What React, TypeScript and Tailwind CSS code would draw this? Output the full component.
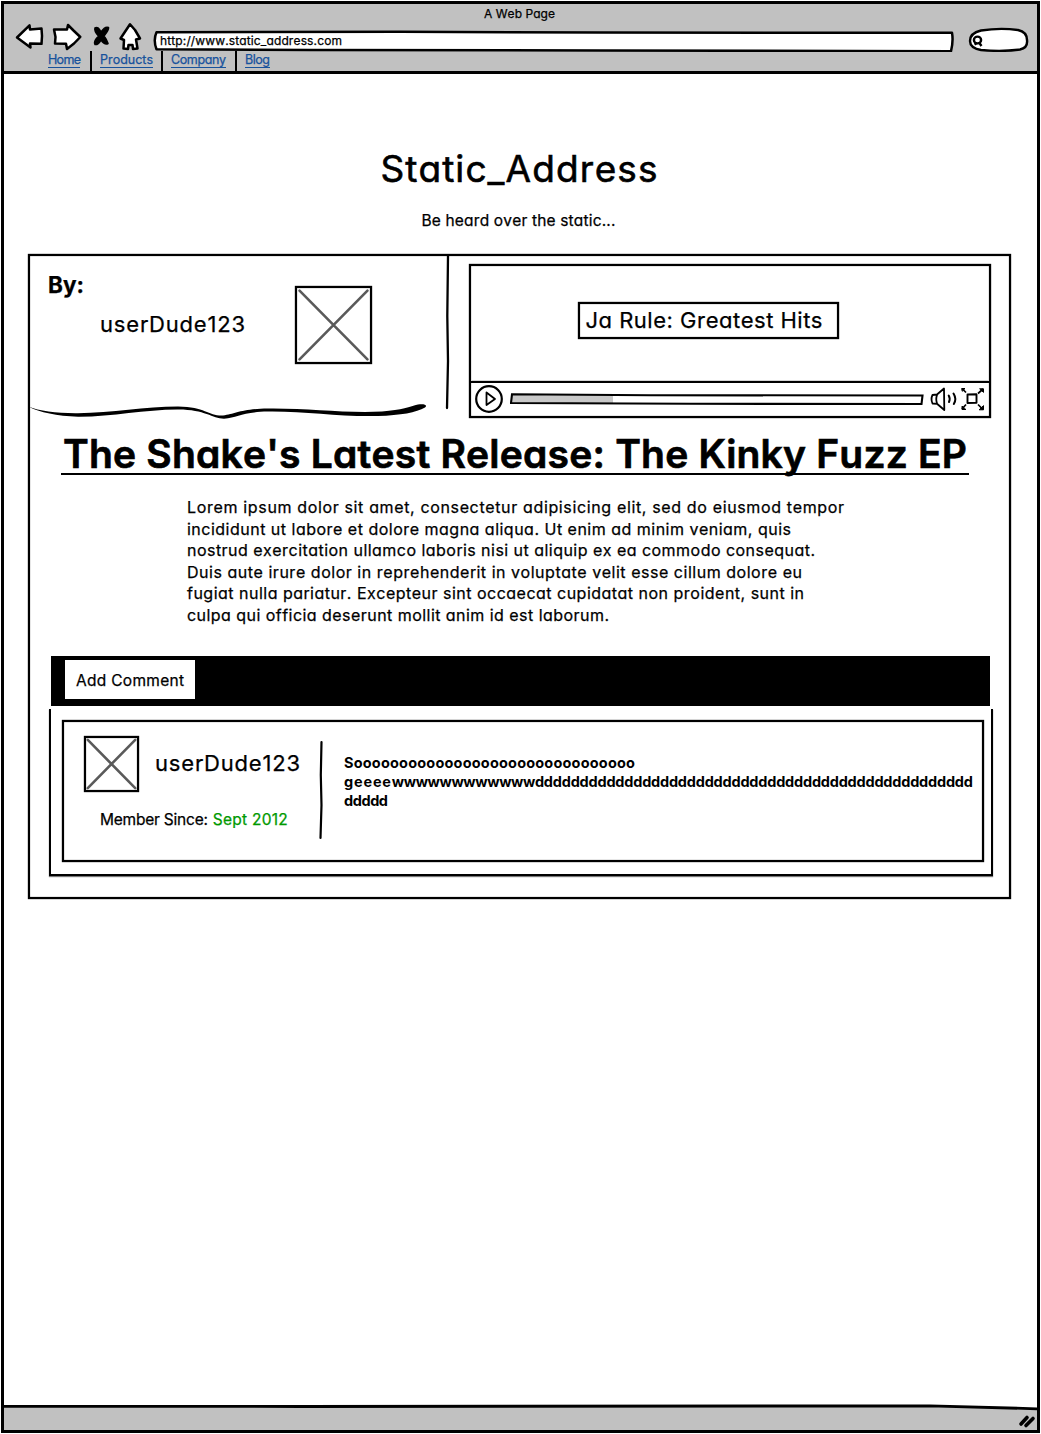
import { useLayoutEffect, useRef, type ReactNode } from "react";

/* One line of text whose letter spacing is adjusted so that it spans `width` pixels. */
function Line({ width, className = "", children }: { width: number; className?: string; children: ReactNode }) {
  const ref = useRef<HTMLSpanElement>(null);
  useLayoutEffect(() => {
    const fit = () => {
      const el = ref.current;
      if (!el) return;
      el.style.letterSpacing = "0px";
      const n = (el.textContent ?? "").length;
      const natural = el.getBoundingClientRect().width;
      el.style.letterSpacing = `${(width - natural) / Math.max(1, n - 1)}px`;
    };
    fit();
    document.fonts?.ready.then(fit);
  }, [width]);
  return (
    <span ref={ref} className={`inline-block whitespace-pre ${className}`}>
      {children}
    </span>
  );
}

function Placeholder({ className }: { className: string }) {
  return (
    <div className={`shrink-0 border-2 border-black shadow-[0_0_1px_#000,inset_0_0_1px_#000] ${className}`}>
      <svg className="block h-full w-full" viewBox="0 0 72 72" preserveAspectRatio="none" fill="none" stroke="#5a5a5a" strokeWidth="2.6" strokeLinecap="round">
        <path vectorEffect="non-scaling-stroke" d="M2.5 2.5 L69.5 69.5 M69.5 2.5 L2.5 69.5" />
      </svg>
    </div>
  );
}

function NavIcons() {
  return (
    <svg className="block h-[30px] w-[130px]" viewBox="14 22 130 30" fill="white" stroke="black" strokeWidth="2.5" strokeLinejoin="round" strokeLinecap="round">
      <path d="M17 37.5 L29.5 25.3 L30 29.5 L41.5 28.5 L42 36 L41.5 43.8 L30 43.5 L30.5 47.5 Z" />
      <path d="M54 29.5 L67 29.5 L68 25 L73.5 30.5 L80.3 37 L74 43.5 L67 49 L66 43.8 L55 43.5 L55.5 37 Z" />
      <path fill="black" strokeWidth="1.6" d="M95 28 Q98 26 101 32 Q105 26 108.5 27.5 Q109 30 104 36 Q107 40 108 43.5 Q105 45.5 101 40 Q98 45 95 44.5 Q93 42 98.5 36 Q94 31 95 28 Z" />
      <path d="M130 24.3 L135 30 L140 38.5 L136 39.5 L137.5 48.5 L133 49 L132.5 45 L128.5 45 L128 49 L123.5 48.5 L124 40 L120.5 38.5 Z" />
    </svg>
  );
}

const links = [
  { label: "Home", width: 33, cell: "w-[51px]" },
  { label: "Products", width: 53, cell: "w-[71px]" },
  { label: "Company", width: 55, cell: "w-[74px]" },
  { label: "Blog", width: 25, cell: "w-[60px]" },
];

function BrowserBar() {
  return (
    <header className="h-[70px] border-b-3 border-black bg-[#c1c1c1]">
      <div className="h-[18px] pr-[2px] pt-[2px] text-center text-[12px] leading-4">
        <Line width={71}>A Web Page</Line>
      </div>
      <div className="flex h-[29px] pl-[10px]">
        <NavIcons />
        <div className="ml-[9px] mt-[6px] grid h-6 w-[801px]">
          <svg className="col-start-1 row-start-1 h-6 w-[801px]" viewBox="153 28 801 24" fill="white" stroke="black" strokeWidth="2.5" strokeLinejoin="round">
            <path d="M156.5 32.2 L400 31.7 L600 32.5 L952 32.8 Q953.5 41 951 51.2 L600 50.5 L310 50 L156.5 49.3 Q153 40 156.5 32.2 Z" />
          </svg>
          <div className="col-start-1 row-start-1 pl-[7px] pt-[5px] text-[12px] leading-4">
            <Line width={182}>http://www.static_address.com</Line>
          </div>
        </div>
        <svg className="ml-[13px] mt-[4px] h-[26px] w-[62px]" viewBox="967 27 62 26" fill="white" stroke="black" strokeWidth="2.4">
          <path d="M981 31.5 Q1000 28.5 1018 31 Q1027 33 1027 41 Q1028 49 1020 50.5 Q1002 53 981 51 Q970 49 970 42 Q970 34 981 31.5 Z" />
          <ellipse cx="977.5" cy="41" rx="3.6" ry="3.4" />
          <path d="M974.5 45.5 L977 44 M979 43.5 L981.5 47" />
        </svg>
      </div>
      <nav className="flex h-[20px] pl-[44px] text-[12.5px] leading-[17px] text-[#17529c]">
        {links.map((l, i) => (
          <div key={l.label} className={`${l.cell} ${i ? "border-l-2 border-black pl-[8px]" : "-mr-[9px]"}`}>
            <a className="inline-block h-[17px] border-b border-[#17529c]">
              <Line width={l.width}>{l.label}</Line>
            </a>
          </div>
        ))}
      </nav>
    </header>
  );
}

function Player() {
  return (
    <section className="mt-[8px] flex h-[154px] w-[522px] flex-col border-2 border-black shadow-[0_0_1px_#000,inset_0_0_1px_#000]">
      <div className="flex h-[115px] items-start justify-center pt-[36px]">
        <div className="-ml-[44px] h-[37px] w-[261px] border-2 border-black pl-[6px] text-[22px] leading-[33px] shadow-[0_0_1px_#000,inset_0_0_1px_#000]">
          <Line width={237}>Ja Rule: Greatest Hits</Line>
        </div>
      </div>
      <div className="flex flex-1 items-center border-t-2 border-black pb-px pl-[4px] shadow-[0_-1px_1px_-1px_#000]">
        <svg className="h-7 w-7" viewBox="0 0 28 28" fill="none" stroke="black" strokeWidth="2.2" strokeLinejoin="round">
          <circle cx="14" cy="14" r="12.8" />
          <path strokeWidth="1.8" d="M11.5 7.5 L20 14 L11.5 20 Z" />
        </svg>
        <svg className="ml-[7px] h-3 w-[415px]" viewBox="510 393 415 12">
          <path fill="#c8c8c8" d="M512 394.5 H613 V403.5 H511 Z" />
          <path fill="none" stroke="black" strokeWidth="2.1" d="M512 394.3 L650 395.2 L922.5 395.5 L921.5 404 L690 403.8 L511 403 Z" />
        </svg>
        <svg className="ml-[5px] h-[26px] w-[56px]" viewBox="930 387 56 26" fill="none" stroke="black" strokeWidth="2" strokeLinecap="round" strokeLinejoin="round">
          <path d="M937 395.5 L944 389.5 L944.3 411 L937 404.8 L932.5 404.5 Q930.5 400 932.5 396 Z M937 396 Q935.5 400 937 404.5" strokeWidth="1.8" />
          <path d="M948.7 396.5 Q950.5 399.5 949 403 M953.5 394.5 Q957 400 953.8 405" />
          <path strokeWidth="1.9" d="M967.5 395.5 L976.5 395.3 L976.5 403.8 L967.5 404 Z" />
          <path strokeWidth="1.7" strokeLinecap="butt" d="M962.5 390 L966 393.5 M983 390 L978 394.5 M966 405.5 L962 410 M978 405.5 L983 410.5" />
          <path fill="black" strokeWidth="1" d="M962 389.5 H965 L962.5 392 Z M980 389.8 H983.5 V393 Z M962 407.5 V410.5 H965.5 Z M983.5 407 V410.8 H979.5 Z" />
        </svg>
      </div>
    </section>
  );
}

function Author() {
  return (
    <section className="flex w-[415px] flex-col">
      <div className="flex h-[142px] shrink-0">
        <div className="w-[265px] pl-[18px] pt-[13px] text-[22px]">
          <Line width={36} className="text-[22.5px] font-bold leading-8">By:</Line>
          <div className="ml-[52px] mt-[6px] leading-8">
            <Line width={145}>userDude123</Line>
          </div>
        </div>
        <Placeholder className="mt-[30px] h-[78px] w-[77px]" />
      </div>
      <svg className="-ml-[2px] mt-px h-6 w-[400px] shrink-0 overflow-visible" viewBox="28 399 400 24">
        <path d="M28 406.5 Q46 413.5 78 413.2 C112 413 145 406.5 178 406.5 C206 407 208 416 223 415.5 C236 414 240 409 268 408.5 C308 408 345 413.5 382 411.5 C402 410 410 406.5 418 404.5 C424 403.5 428 405 425 407.5 Q412 415 378 416 C340 417 305 411 268 411.5 C242 412 238 417.5 224 418.8 C212 418.5 205 409.5 178 409.6 C145 409.5 112 417 78 416.8 Q46 415.5 28 406.5 Z" />
      </svg>
    </section>
  );
}

const article: [string, number][] = [
  ["Lorem ipsum dolor sit amet, consectetur adipisicing elit, sed do eiusmod tempor", 657],
  ["incididunt ut labore et dolore magna aliqua. Ut enim ad minim veniam, quis", 604],
  ["nostrud exercitation ullamco laboris nisi ut aliquip ex ea commodo consequat.", 628],
  ["Duis aute irure dolor in reprehenderit in voluptate velit esse cillum dolore eu", 615],
  ["fugiat nulla pariatur. Excepteur sint occaecat cupidatat non proident, sunt in", 617],
  ["culpa qui officia deserunt mollit anim id est laborum.", 422],
];

/* Each row of the comment is a run of segments with their own widths. */
const comment: [string, number][][] = [
  [["S" + "o".repeat(31), 291]],
  [["geeee", 47], ["w".repeat(12), 143.5], ["d".repeat(49), 438]],
  [["ddddd", 44]],
];

export default function App() {
  return (
    <div className="flex h-[1434px] w-[1041px] bg-white pl-px pt-px font-['Inter',sans-serif] text-black [-webkit-text-stroke:0.25px_currentColor] [font-feature-settings:'cv11','calt'_0] [font-kerning:none]">
      <div className="flex h-[1432px] w-[1039px] flex-col border-3 border-black">
        <BrowserBar />
        <main className="flex flex-1 flex-col">
          <h1 className="mt-[71px] pr-[2px] text-center text-[37px] leading-[48px] [-webkit-text-stroke:0.6px_currentColor]">
            <Line width={277}>Static_Address</Line>
          </h1>
          <p className="mt-[16px] pr-[4px] text-center text-[15.5px] leading-6">
            <Line width={194}>Be heard over the static...</Line>
          </p>
          <div className="ml-[24px] mt-[21px] flex h-[645px] w-[983px] flex-col border-2 border-black shadow-[0_0_1px_#000,inset_0_0_1px_#000]">
            <div className="flex h-[162px]">
              <Author />
              <svg className="h-[156px] w-[6px]" viewBox="0 0 6 156">
                <path fill="none" stroke="black" strokeWidth="2.3" strokeLinecap="round" d="M3 0 L2.3 60 L3 105 L2 152" />
              </svg>
              <div className="ml-[18px]"><Player /></div>
            </div>
            <h2 className="ml-[31px] mt-[12px] h-[45px] w-[908px] border-b-2 border-black pl-[2px] text-[39px] font-semibold leading-[47px] [-webkit-text-stroke:0.7px_currentColor]">
              <Line width={904}>The Shake's Latest Release: The Kinky Fuzz EP</Line>
            </h2>
            <div className="ml-[157px] mt-[22px] flex flex-col text-[16px] leading-[21.6px]">
              {article.map(([text, width]) => (
                <div key={text}><Line width={width}>{text}</Line></div>
              ))}
            </div>
            <div className="ml-[21px] mt-[29.4px] h-[50px] w-[939px] shrink-0 bg-black pl-[14px] pt-1">
              <button className="block h-[39px] w-[130px] bg-white pl-[11px] text-left text-[15.5px] leading-[41px]">
                <Line width={108}>Add Comment</Line>
              </button>
            </div>
            <div className="ml-[19px] mt-[3px] h-[167px] w-[944px] shrink-0 border-x-2 border-b-2 border-black pl-[11px] pt-[11px] shadow-[0_1px_1px_#0008]">
              <div className="flex h-[142px] w-[922px] border-2 border-black shadow-[0_0_1px_#000,inset_0_0_1px_#000]">
                <div className="w-[255px] pl-[20px] pt-[14px]">
                  <div className="flex">
                    <Placeholder className="h-[56px] w-[55px]" />
                    <div className="ml-[16px] pt-[11px] text-[22px] leading-8">
                      <Line width={145}>userDude123</Line>
                    </div>
                  </div>
                  <div className="ml-[16px] mt-[16px] flex text-[15.5px] leading-6">
                    <Line width={108}>Member Since:</Line>
                    <Line width={75} className="ml-[5px] text-[#009900]">Sept 2012</Line>
                  </div>
                </div>
                <svg className="mt-[18px] h-[101px] w-[6px]" viewBox="0 0 6 101">
                  <path fill="none" stroke="black" strokeWidth="2.2" strokeLinecap="round" d="M2.5 2 L1.8 35 L2.5 65 L1.5 98" />
                </svg>
                <div className="ml-[19px] pt-[31px] text-[14.5px] font-bold leading-[19px] [-webkit-text-stroke:0]">
                  {comment.map((segments, row) => (
                    <div key={row} className="flex">
                      {segments.map(([text, width]) => (
                        <Line key={text} width={width}>{text}</Line>
                      ))}
                    </div>
                  ))}
                </div>
              </div>
            </div>
          </div>
        </main>
        <footer className="flex h-[28px] shrink-0 justify-end">
          <svg className="h-[28px] w-[1033px]" viewBox="4 1402 1033 28">
            <path fill="#c1c1c1" d="M4 1406 L930 1405.5 L1037 1408.5 V1430 H4 Z" />
            <path fill="none" stroke="black" strokeWidth="2.8" d="M4 1406.3 L300 1406.5 L930 1405.8 L1037 1408.8" />
            <path fill="none" stroke="black" strokeWidth="3.6" strokeLinecap="round" d="M1021 1424 L1027 1417.5 M1026 1425.5 L1033 1418.5" />
          </svg>
        </footer>
      </div>
    </div>
  );
}
